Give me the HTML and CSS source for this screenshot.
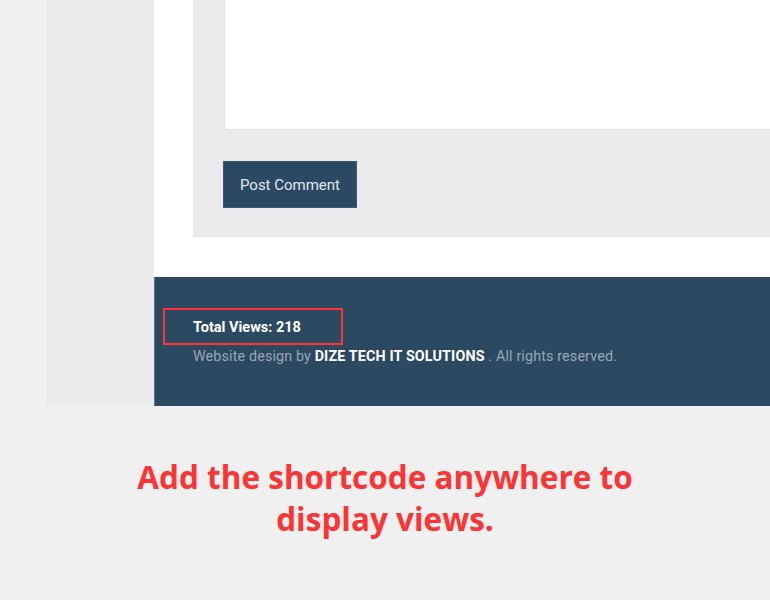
FILE: index.html
```html
<!DOCTYPE html>
<html>
<head>
<meta charset="utf-8">
<link rel="stylesheet" href="styles.css">
</head>
<body>
<div class="page">
  <aside class="sidebar"></aside>
  <div class="main">
    <section class="content">
      <div class="comment-box">
        <div class="textarea"></div>
        <button class="btn">Post Comment</button>
      </div>
    </section>
    <footer class="footer">
      <div class="views"><span class="views-text">Total Views: 218</span></div>
      <p class="credit">Website design by <strong>DIZE TECH IT SOLUTIONS</strong> . All rights reserved.</p>
    </footer>
  </div>
</div>
<h1 class="note">Add the shortcode anywhere to<br>display views.</h1>
</body>
</html>
```
FILE: styles.css
```css
html, body {
  margin: 0;
  padding: 0;
  background: #f0f0f0;
}
body {
  width: 770px;
  overflow: hidden;
  font-family: "Roboto", "Liberation Sans", sans-serif;
}
.page {
  display: flex;
  height: 406px;
  padding-left: 46px;
}
.sidebar {
  width: 108px;
  background: #ebebed;
}
.main {
  flex: 1;
  display: flex;
  flex-direction: column;
}
.content {
  height: 277px;
  background: #fff;
  padding-left: 39px;
}
.comment-box {
  height: 237px;
  background: #ebebed;
  padding-left: 30px;
  display: flex;
  flex-direction: column;
  align-items: flex-start;
}
.textarea {
  align-self: stretch;
  height: 130px;
  margin-left: 1px;
  background: #fff;
  border-left: 1px solid #e4e4e6;
  border-bottom: 1px solid #e4e4e6;
  box-sizing: border-box;
}
.btn {
  margin-top: 31px;
  width: 134px;
  height: 47px;
  background: #2b4962;
  border: 1px solid #3d5a72;
  color: #e2e8ee;
  font-family: "Roboto", "Liberation Sans", sans-serif;
  font-size: 15px;
  padding: 0;
}
.footer {
  flex: 1;
  background: #2b4961;
  border-left: 1px solid #5f7487;
  padding-left: 38px;
  padding-top: 31px;
}
.views {
  position: relative;
  height: 37px;
  display: flex;
  align-items: center;
  padding-top: 2px;
  box-sizing: border-box;
}
.views::before {
  content: "";
  position: absolute;
  left: -30px;
  top: 0;
  width: 180px;
  height: 37px;
  border: 2px solid #ff3434;
  box-sizing: border-box;
}
.views-text {
  color: #fff;
  font-weight: bold;
  font-size: 14.5px;
}
.credit {
  margin: 3px 0 0;
  font-size: 14.3px;
  color: #9aa7b4;
  letter-spacing: 0.15px;
}
.credit strong {
  color: #fff;
}
.note {
  margin: 50px 0 0;
  text-align: center;
  color: #ff3333;
  font-family: "Open Sans", "Liberation Sans", sans-serif;
  font-weight: bold;
  font-size: 31.5px;
  line-height: 42px;
}
```
